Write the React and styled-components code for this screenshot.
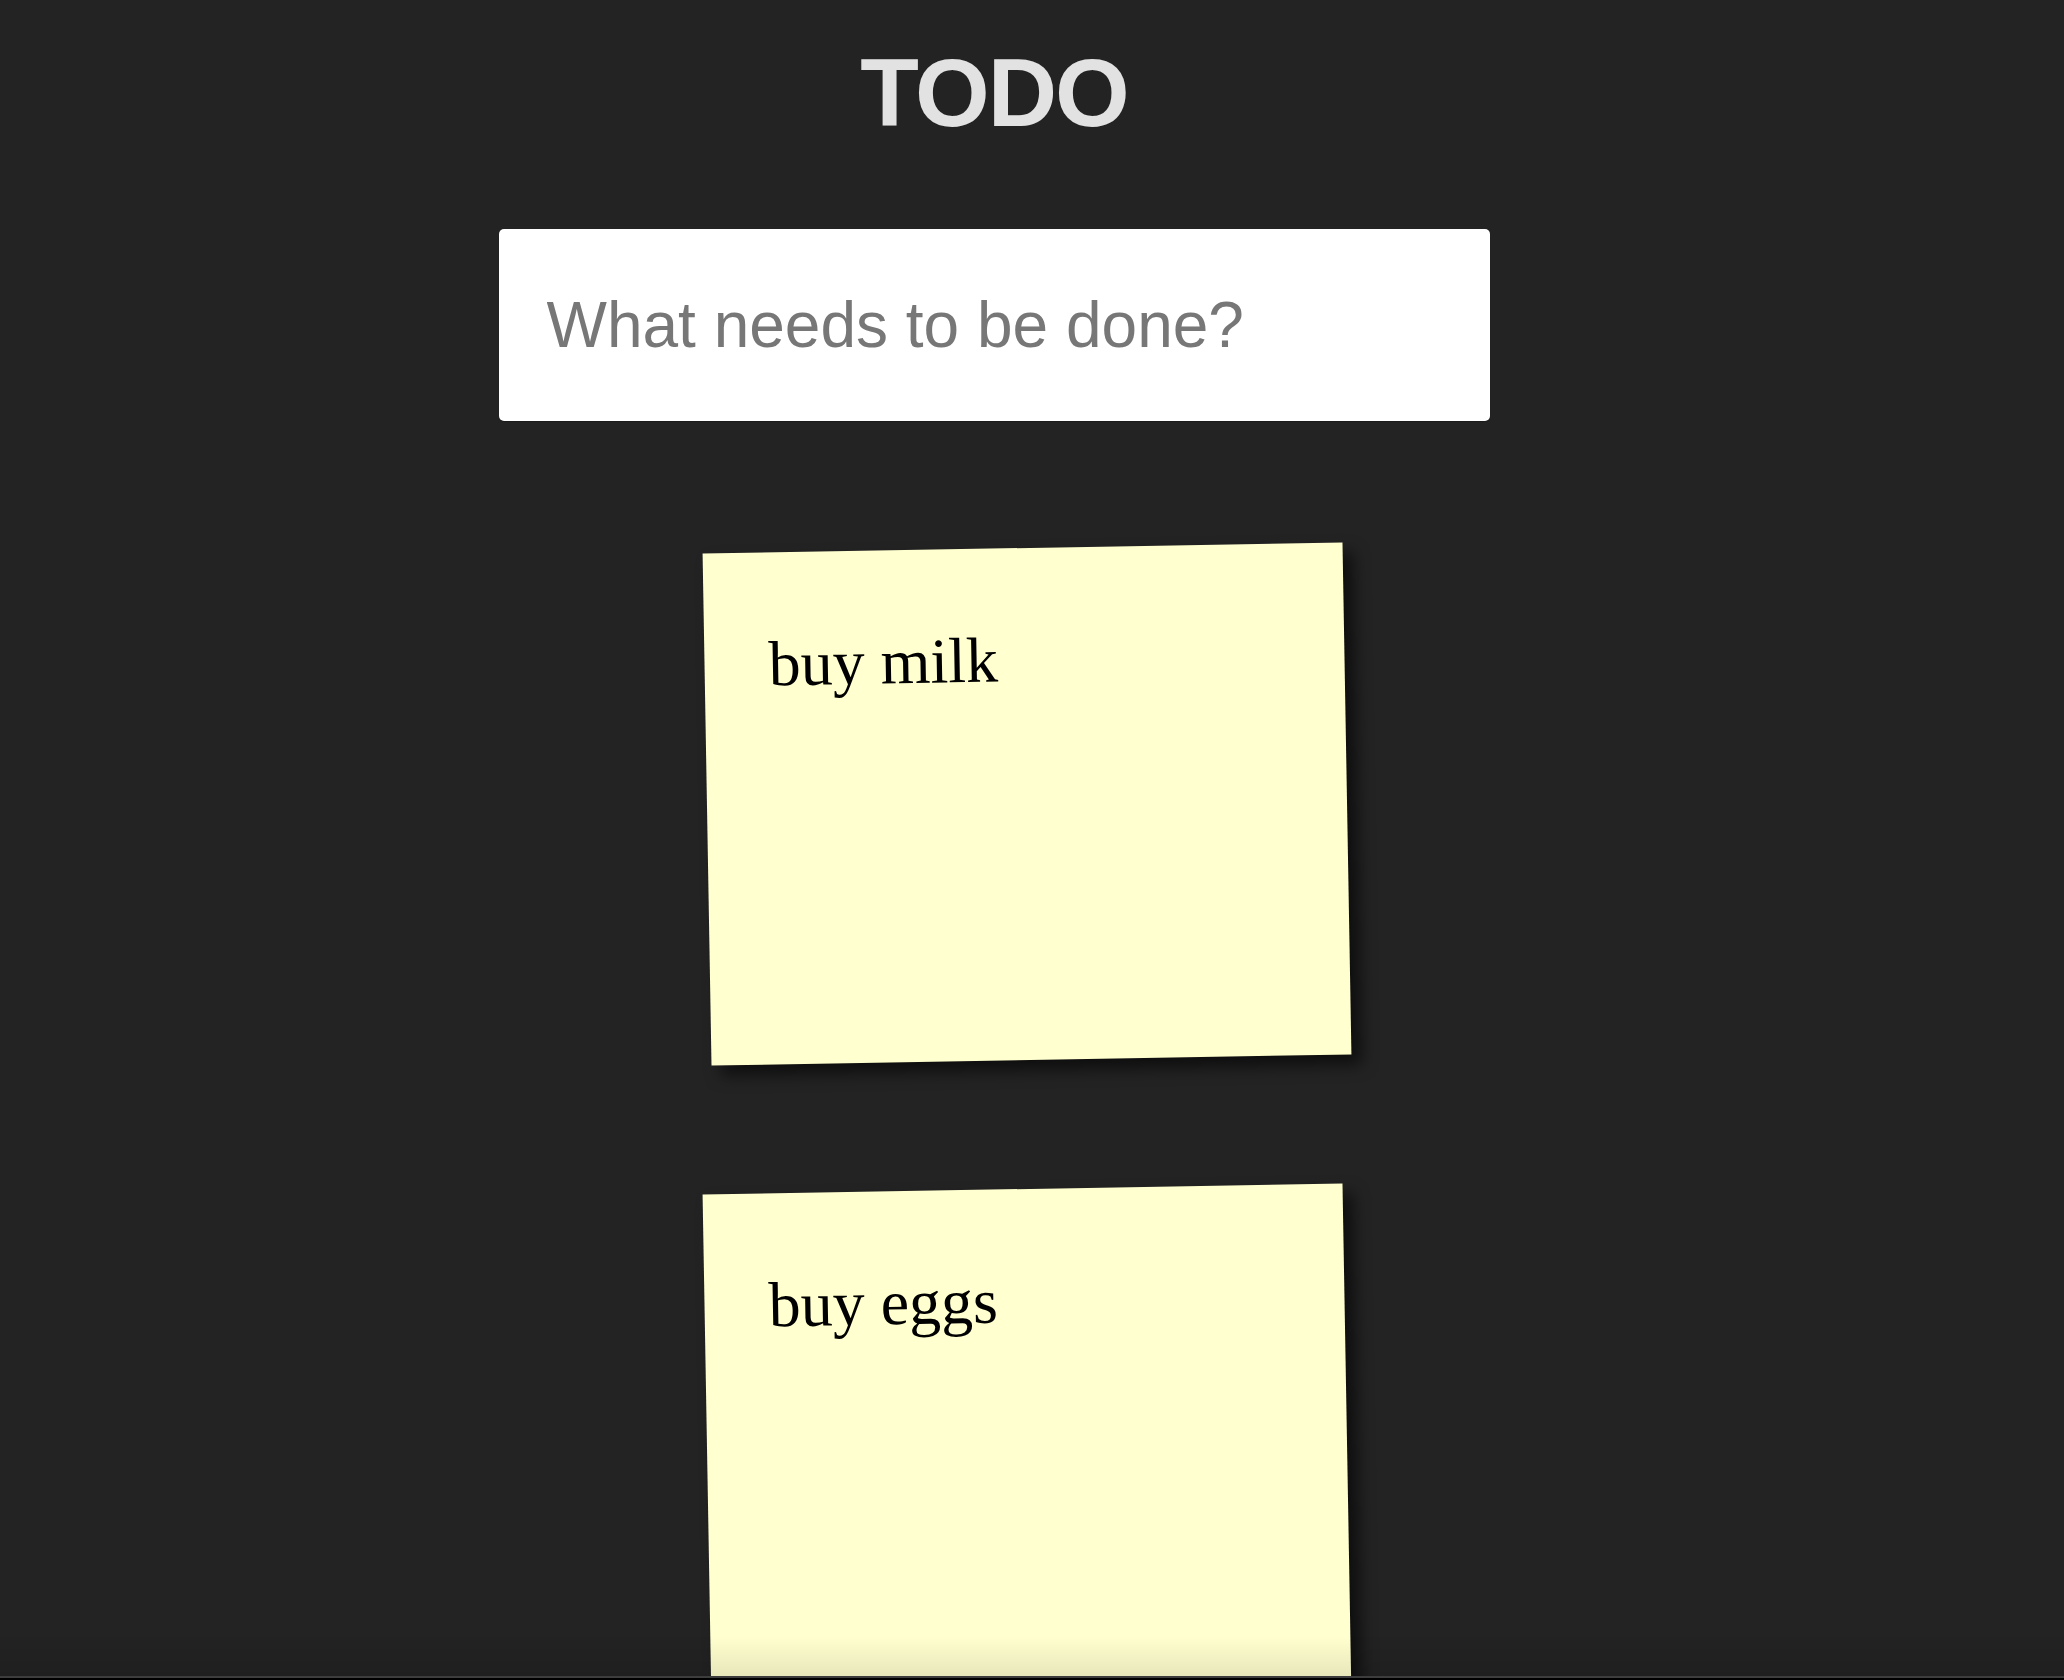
import React, { Component } from 'react'
import styled, { createGlobalStyle } from 'styled-components'

const GlobalStyle = createGlobalStyle`
html, body {
  margin: 0;
  padding: 0;
  background: #232323;
}
`

const Page = styled.div`
width: 1988px;
display: flex;
flex-direction: column;
align-items: center;
`

const Title = styled.h1`
margin: 0;
padding-top: 38px;
font-family: "Liberation Sans", Arial, sans-serif;
font-size: 96px;
font-weight: bold;
line-height: 110px;
letter-spacing: -2px;
color: #e2e2e2;
`

const NewTodo = styled.input`
box-sizing: border-box;
margin-top: 81px;
width: 991px;
height: 192px;
padding: 0 48px;
border: none;
border-radius: 5px;
outline: none;
background: white;
box-shadow: 0 1px 1px rgba(0, 0, 0, 0.25);
font-family: "Liberation Sans", Arial, sans-serif;
font-size: 64px;
color: #222;
caret-color: black;

&::placeholder {
  color: #777;
}
`

const NoteList = styled.ul`
list-style: none;
margin: 127px 0 0 0;
padding: 0 0 0 66px;
display: flex;
flex-direction: column;
gap: 129px;
`

const Note = styled.li`
box-sizing: border-box;
width: 640px;
height: 512px;
padding: 75px 64px;
background: #ffffcf;
transform: rotate(${props => props.tilt}deg);
box-shadow: 10px 10px 16px rgba(0, 0, 0, 0.6);
font-family: "Liberation Serif", "Times New Roman", serif;
font-size: 64px;
color: black;
`

const BottomEdge = styled.div`
position: fixed;
left: 0;
right: 0;
bottom: 0;
height: 44px;
pointer-events: none;
background:
  linear-gradient(#000, #000) bottom / 100% 2px no-repeat,
  linear-gradient(#3d3d3d, #3d3d3d) bottom 2px left 0 / 100% 2px no-repeat,
  linear-gradient(rgba(0, 0, 0, 0), rgba(0, 0, 0, 0.1));
`

export default class App extends Component {
  state = {
    todos: ['buy milk', 'buy eggs']
  }

  render() {
    const notes = this.state.todos.map((todo, i) => {
      return <Note key={i} tilt={-1}>{todo}</Note>
    })
    return (
      <Page>
        <GlobalStyle />
        <Title>TODO</Title>
        <NewTodo placeholder='What needs to be done?' autoFocus />
        <NoteList>{notes}</NoteList>
        <BottomEdge />
      </Page>
    )
  }
}
